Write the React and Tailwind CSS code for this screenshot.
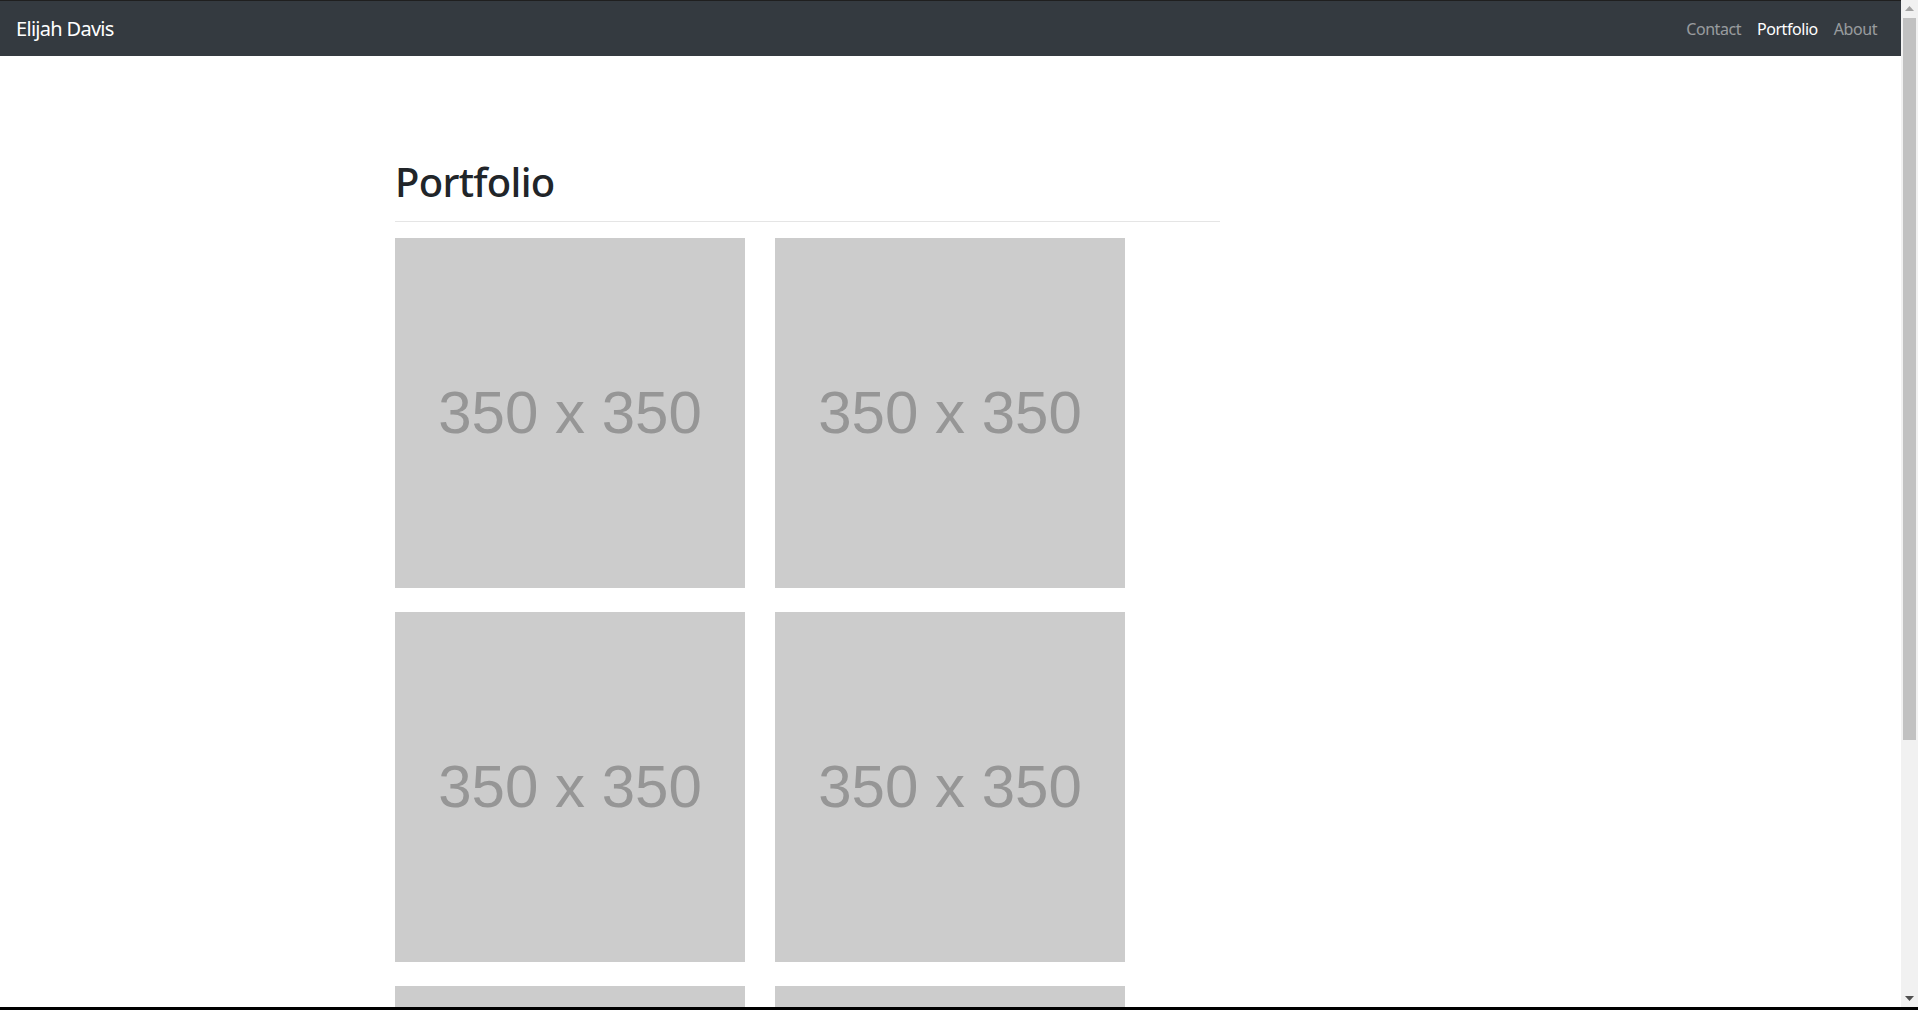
import React from 'react';

const tiles = [1, 2, 3, 4, 5, 6];

export default function App() {
  return (
    <div className="h-[1010px] w-full flex flex-col overflow-hidden bg-white">
      <div className="flex flex-1 min-h-0">
        {/* Page */}
        <div className="flex-1 min-w-0 flex flex-col overflow-hidden">
          {/* Navbar */}
          <nav className="h-[56px] shrink-0 bg-[#343a40] border-t border-[#1f1f1f] flex items-center justify-between px-4 font-['Noto_Sans',sans-serif]">
            <a className="text-white text-[20px] leading-[30px] tracking-[-0.7px]">Elijah Davis</a>
            <div className="flex items-center text-[16px] tracking-[-0.45px]">
              <a className="px-2 text-white/50">Contact</a>
              <a className="px-2 text-white">Portfolio</a>
              <a className="px-2 text-white/50">About</a>
            </div>
          </nav>

          {/* Main Content */}
          <div className="w-[1140px] ml-[380px] px-[15px]">
            <div className="w-[825px]">
              <h1 className="mt-[102px] text-[40px] leading-[48px] font-medium text-[#212529] font-['Noto_Sans',sans-serif] tracking-[-0.7px]">
                Portfolio
              </h1>
              <hr className="mt-[15px] mb-[16px] border-0 border-t border-[#e5e5e5]" />
              <div className="grid grid-cols-[350px_350px] gap-x-[30px] gap-y-[24px]">
                {tiles.map((t) => (
                  <div
                    key={t}
                    className="w-[350px] h-[350px] bg-[#cccccc] flex items-center justify-center"
                  >
                    <span className="text-[60px] text-[#969696] font-['Liberation_Sans',Arial,sans-serif]">
                      350 x 350
                    </span>
                  </div>
                ))}
              </div>
            </div>
          </div>
        </div>

        {/* Scrollbar */}
        <div className="w-[17px] shrink-0 bg-[#f1f1f1] flex flex-col items-center">
          <div className="h-[17px] flex items-center justify-center">
            <svg width="9" height="5" viewBox="0 0 9 5">
              <path d="M4.5 0 L9 5 L0 5 Z" fill="#a3a3a3" />
            </svg>
          </div>
          <div className="w-[13px] h-[722px] bg-[#c1c1c1] mt-px" />
          <div className="flex-1" />
          <div className="h-[17px] flex items-center justify-center">
            <svg width="9" height="5" viewBox="0 0 9 5">
              <path d="M0 0 L9 0 L4.5 5 Z" fill="#505050" />
            </svg>
          </div>
        </div>
      </div>
      <div className="h-[3px] shrink-0 bg-black" />
    </div>
  );
}
